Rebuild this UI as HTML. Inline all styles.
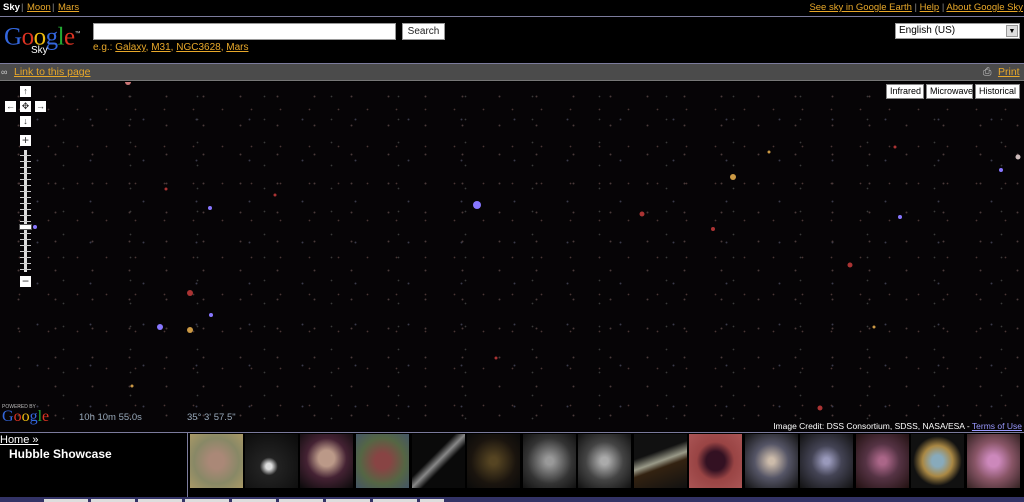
<!DOCTYPE html>
<html><head><style>
*{margin:0;padding:0;box-sizing:border-box}
body{width:1024px;height:502px;background:#000;font-family:"Liberation Sans",Arial,sans-serif;position:relative;overflow:hidden;color:#fff}
a{color:#e8a82a;text-decoration:underline}
.abs{position:absolute}
.top{left:0;top:0;width:1024px;height:16px;font-size:9.5px;line-height:15px}
.hr{left:0;width:1024px;height:1px;background:#7b7b9c}
.btn{background:#fff;color:#000;font-size:9px;line-height:13px;padding:0 3px;border:1px solid #888;top:84px;height:15px}
.nb{background:#fff;width:11px;height:11px;color:#333;font-size:9px;line-height:11px;text-align:center}
.th{top:434px;width:53px;height:54px}
.sky{left:0;top:82px;width:1024px;height:350px;background-color:#060406;
background-image:
radial-gradient(circle,#4a3a3a 0.7px,transparent 1.2px),
radial-gradient(circle,#3a3a4a 0.7px,transparent 1.2px),
radial-gradient(circle,#4a3535 0.6px,transparent 1.1px),
radial-gradient(circle,#3a3a3a 0.6px,transparent 1.1px);
background-size:37px 29px,53px 41px,29px 37px,67px 23px;
background-position:0 0,11px 17px,5px 9px,30px 3px}
</style></head><body>
<div class="abs top"><span style="position:absolute;left:3px;font-weight:bold">Sky</span><span style="position:absolute;left:21px;color:#888">|</span><a class="abs" style="left:27px">Moon</a><span style="position:absolute;left:52px;color:#888">|</span><a class="abs" style="left:58px">Mars</a>
<span class="abs" style="right:1px;white-space:nowrap;font-size:9.5px"><a>See sky in Google Earth</a> <span style="color:#888">|</span> <a>Help</a> <span style="color:#888">|</span> <a>About Google Sky</a></span></div>
<div class="abs hr" style="top:16px"></div>
<div class="abs" style="left:4px;top:20px;font-family:'Liberation Serif',serif;font-size:25px;letter-spacing:-0.5px;line-height:28px"><span style="color:#3366dd">G</span><span style="color:#dd3322">o</span><span style="color:#eebb11">o</span><span style="color:#3366dd">g</span><span style="color:#22aa33">l</span><span style="color:#dd3322">e</span><sup style="font-size:6px;color:#ccc;font-family:'Liberation Sans'">™</sup></div>
<div class="abs" style="left:31px;top:45px;font-size:10px">Sky</div>
<div class="abs" style="left:93px;top:23px;width:303px;height:17px;background:#fff;border:1px solid #999"></div>
<div class="abs" style="left:402px;top:23px;width:43px;height:17px;background:#fff;border:1px solid #999;color:#222;font-size:10px;text-align:center;line-height:15px">Search</div>
<div class="abs" style="left:93px;top:42px;font-size:10px;color:#e8a82a">e.g.: <a>Galaxy</a>, <a>M31</a>, <a>NGC3628</a>, <a>Mars</a></div>
<div class="abs" style="left:895px;top:23px;width:125px;height:16px;background:#fff;border:1px solid #999;color:#000;font-size:10px;line-height:14px;padding-left:3px">English (US)<span style="position:absolute;right:1px;top:1px;width:12px;height:12px;background:#ddd;border:1px solid #999;font-size:7px;text-align:center;line-height:11px">▼</span></div>
<div class="abs hr" style="top:63px"></div>
<div class="abs" style="left:0;top:64px;width:1024px;height:17px;background:#4b4b4b;border-bottom:1px solid #777;font-size:10.5px;line-height:17px"><span style="position:absolute;left:1px;color:#ccc;font-size:9px">∞</span><a class="abs" style="left:14px">Link to this page</a><span style="position:absolute;left:983px;color:#ccc">⎙</span><a class="abs" style="left:998px">Print</a></div>
<div class="abs sky"></div>
<svg class="abs" style="left:0;top:82px" width="1024" height="350">
<g fill="#a33">
<circle cx="190" cy="211" r="3"/><circle cx="642" cy="132" r="2.5"/><circle cx="850" cy="183" r="2.5"/><circle cx="713" cy="147" r="2"/><circle cx="820" cy="326" r="2.5"/><circle cx="128" cy="0" r="3" fill="#c77"/><circle cx="166" cy="107" r="1.5"/><circle cx="496" cy="276" r="1.5"/><circle cx="275" cy="113" r="1.5"/><circle cx="895" cy="65" r="1.5"/></g>
<g fill="#87f"><circle cx="477" cy="123" r="4"/><circle cx="160" cy="245" r="3"/><circle cx="210" cy="126" r="2"/><circle cx="211" cy="233" r="2"/><circle cx="1001" cy="88" r="2"/><circle cx="900" cy="135" r="2"/><circle cx="35" cy="145" r="2"/></g>
<g fill="#c94"><circle cx="733" cy="95" r="3"/><circle cx="190" cy="248" r="3"/><circle cx="1018" cy="75" r="2.5" fill="#cbb"/><circle cx="769" cy="70" r="1.5"/><circle cx="874" cy="245" r="1.5"/><circle cx="132" cy="304" r="1.5"/></g>
</svg>
<div class="abs nb" style="left:20px;top:86px">↑</div>
<div class="abs nb" style="left:5px;top:101px">←</div><div class="abs nb" style="left:20px;top:101px">✥</div><div class="abs nb" style="left:35px;top:101px">→</div>
<div class="abs nb" style="left:20px;top:116px">↓</div>
<div class="abs nb" style="left:20px;top:135px;font-size:12px">+</div>
<div class="abs" style="left:24px;top:150px;width:3px;height:122px;background:#ddd"></div>
<div class="abs" style="left:20px;top:150px;width:11px;height:122px;background:repeating-linear-gradient(#0000 0 5px,#ccc 5px 6px)"></div>
<div class="abs" style="left:19px;top:224px;width:13px;height:6px;background:#fff;border:1px solid #555"></div>
<div class="abs nb" style="left:20px;top:276px;font-size:12px">−</div>
<div class="abs btn" style="left:886px;width:38px">Infrared</div>
<div class="abs btn" style="left:926px;width:47px">Microwave</div>
<div class="abs btn" style="left:975px;width:45px">Historical</div>
<div class="abs" style="left:2px;top:404px;font-size:5px;color:#bbb">POWERED BY</div>
<div class="abs" style="left:2px;top:408px;font-family:'Liberation Serif',serif;font-size:16px"><span style="color:#36d">G</span><span style="color:#d32">o</span><span style="color:#eb1">o</span><span style="color:#36d">g</span><span style="color:#2a3">l</span><span style="color:#d32">e</span></div>
<div class="abs" style="left:79px;top:412px;font-size:9.5px;color:#9ab">10h 10m 55.0s</div>
<div class="abs" style="left:187px;top:412px;font-size:9.5px;color:#9ab">35° 3' 57.5"</div>
<div class="abs" style="right:2px;top:421px;font-size:8.5px;color:#fff">Image Credit: DSS Consortium, SDSS, NASA/ESA - <a style="color:#99f">Terms of Use</a></div>
<div class="abs hr" style="top:432px"></div>
<div class="abs" style="left:187px;top:433px;width:1px;height:64px;background:#7b7b9c"></div>
<div class="abs" style="left:0;top:434px;font-size:11px;color:#fff;text-decoration:underline">Home »</div>
<div class="abs" style="left:9px;top:447px;font-size:12px;font-weight:bold">Hubble Showcase</div>
<div class="abs th" style="left:190px;background:radial-gradient(#a87 20%,#886 60%,#a96)"></div>
<div class="abs th" style="left:245px;background:radial-gradient(circle at 45% 60%,#ddd 3px,#222 9px,#0a0a0a)"></div>
<div class="abs th" style="left:300px;background:radial-gradient(circle at 50% 45%,#b98 8px,#423 20px,#0a0a0a)"></div>
<div class="abs th" style="left:356px;background:radial-gradient(#844 20%,#564 60%,#456)"></div>
<div class="abs th" style="left:412px;background:linear-gradient(135deg,#0a0a0a 40%,#888 50%,#0a0a0a 60%)"></div>
<div class="abs th" style="left:467px;background:radial-gradient(#542 10%,#1a140e 60%,#0a0a0a)"></div>
<div class="abs th" style="left:523px;background:radial-gradient(#999 10%,#333 60%,#111)"></div>
<div class="abs th" style="left:578px;background:radial-gradient(#aaa 10%,#444 50%,#111)"></div>
<div class="abs th" style="left:634px;background:linear-gradient(160deg,#111 35%,#998 50%,#321 60%,#111)"></div>
<div class="abs th" style="left:689px;background:radial-gradient(#312 25%,#944 50%,#a55)"></div>
<div class="abs th" style="left:745px;background:radial-gradient(#cba 8%,#556 45%,#111)"></div>
<div class="abs th" style="left:800px;background:radial-gradient(#99b 8%,#445 40%,#111)"></div>
<div class="abs th" style="left:856px;background:radial-gradient(#a68 10%,#534 45%,#211)"></div>
<div class="abs th" style="left:911px;background:radial-gradient(#8ab 15%,#a84 40%,#111 65%)"></div>
<div class="abs th" style="left:967px;background:radial-gradient(#c8b 15%,#856 50%,#322)"></div>
<div class="abs" style="left:0;top:497px;width:1024px;height:5px;background:#336"></div>
<div class="abs" style="left:44px;top:499px;width:400px;height:3px;background:repeating-linear-gradient(90deg,#ddd 0 44px,#336 44px 47px)"></div>
</body></html>
